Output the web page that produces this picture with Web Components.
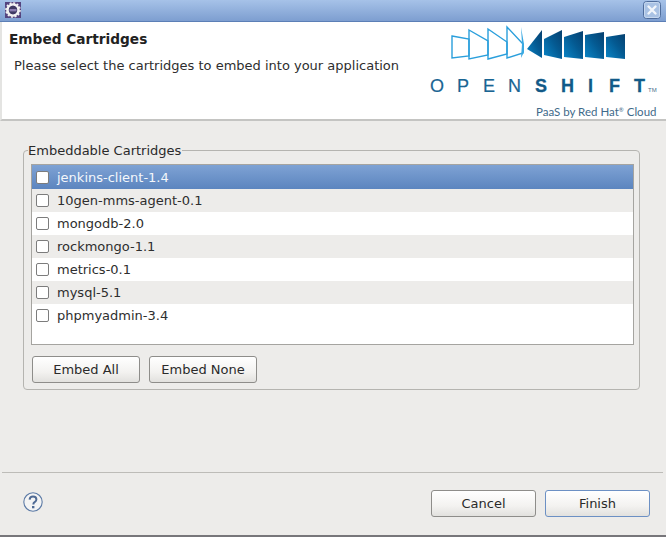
<!DOCTYPE html>
<html>
<head>
<meta charset="utf-8">
<title>Embed Cartridges</title>
<style>
  html, body { margin: 0; padding: 0; height: 100%; overflow: hidden; }
  body { font: 13px "DejaVu Sans", sans-serif; color: #2a2a2a; background: #edecea; }
</style>
</head>
<body>
<wizard-dialog>
  <title-bar slot="title"></title-bar>
  <wizard-header slot="header" heading="Embed Cartridges" message="Please select the cartridges to embed into your application">
    <openshift-logo></openshift-logo>
  </wizard-header>
  <group-box label="Embeddable Cartridges">
    <cartridge-list>
      <cartridge-row selected>jenkins-client-1.4</cartridge-row>
      <cartridge-row alt>10gen-mms-agent-0.1</cartridge-row>
      <cartridge-row>mongodb-2.0</cartridge-row>
      <cartridge-row alt>rockmongo-1.1</cartridge-row>
      <cartridge-row>metrics-0.1</cartridge-row>
      <cartridge-row alt>mysql-5.1</cartridge-row>
      <cartridge-row>phpmyadmin-3.4</cartridge-row>
    </cartridge-list>
    <div slot="actions" style="display:flex;gap:9px;margin-left:1px">
      <push-button>Embed All</push-button>
      <push-button>Embed None</push-button>
    </div>
  </group-box>
  <wizard-footer slot="footer">
    <help-icon slot="help"></help-icon>
    <push-button>Cancel</push-button>
    <push-button default>Finish</push-button>
  </wizard-footer>
</wizard-dialog>
<script>
function define(name, html, init) {
  customElements.define(name, class extends HTMLElement {
    connectedCallback() {
      if (this.shadowRoot) return;
      const root = this.attachShadow({ mode: "open" });
      root.innerHTML = typeof html === "function" ? html(this) : html;
      if (init) init(this, root);
    }
  });
}

define("wizard-dialog", `
  <style>
    :host { display: flex; flex-direction: column; height: 537px; box-sizing: border-box; border-bottom: 2px solid #77767a; background: #edecea; }
    main { flex: 1; padding: 22px 26px 0 23px; }
  </style>
  <slot name="title"></slot>
  <slot name="header"></slot>
  <main><slot></slot></main>
  <slot name="footer"></slot>
`);

define("title-bar", `
  <style>
    :host { display: flex; align-items: flex-start; justify-content: space-between; height: 21px; padding: 0 5px; background: linear-gradient(#a6c2e8, #7d9ed0); border-bottom: 1px solid #5c7fb6; }
    svg { display: block; }
    .icon { margin-top: 2px; }
    .close { margin-top: 1px; }
  </style>
  <svg class="icon" width="16" height="16" viewBox="0 0 16 16">
    <rect width="16" height="16" fill="#54447f"/>
    <circle cx="8" cy="8" r="5.5" fill="none" stroke="#f2f2f2" stroke-width="2.6"/>
    <circle cx="8" cy="8" r="7" fill="none" stroke="#f2f2f2" stroke-width="1.6" stroke-dasharray="2 1.66"/>
    <circle cx="8" cy="8" r="4.2" fill="#3f3a63"/>
    <rect x="4.5" y="7" width="7" height="2.4" fill="#8a7db0"/>
  </svg>
  <svg class="close" width="18" height="18" viewBox="0 0 18 18">
    <rect x=".5" y=".5" width="17" height="17" rx="3" fill="#a9c2e4" stroke="#4f6d9c"/>
    <rect x="1.5" y="1.5" width="15" height="15" rx="2" fill="none" stroke="#c6d8ef"/>
    <path d="M5.5 5.5l7 7M12.5 5.5l-7 7" stroke="#f2f6fb" stroke-width="2.4" stroke-linecap="round"/>
  </svg>
`);

define("wizard-header", el => `
  <style>
    :host { display: flex; justify-content: space-between; height: 97px; background: #fff; border-left: 2px solid #e4e4e2; border-bottom: 2px solid #c4c4c2; box-sizing: content-box; }
    .text { padding: 9px 0 0 7px; }
    h1 { margin: 0; font: bold 13.7px "DejaVu Sans", sans-serif; color: #222; line-height: 17px; }
    p { margin: 9px 0 0 5px; font-size: 13px; line-height: 17px; color: #2e2e2e; }
  </style>
  <div class="text"><h1>${el.getAttribute("heading")}</h1><p>${el.getAttribute("message")}</p></div>
  <slot></slot>
`);

define("openshift-logo", `
  <style>
    :host { display: block; width: 236px; height: 97px; flex: none; }
    svg { display: block; }
    .thin { font: 18px "Liberation Sans", sans-serif; fill: #1a6593; stroke: #1a6593; stroke-width: .2; }
    .bold { font: bold 18px "Liberation Sans", sans-serif; fill: #125a88; stroke: #125a88; stroke-width: .3; }
    .tag { font: 11.5px "Lato", sans-serif; fill: #3f6a8a; }
    .tm { font: 6px "Liberation Sans", sans-serif; fill: #4a6f8c; }
  </style>
  <svg width="236" height="97" viewBox="430 22 236 97">
    <defs>
      <linearGradient id="g" x1="0" y1="1" x2="1" y2="0">
        <stop offset="0" stop-color="#0a86c8"/><stop offset=".55" stop-color="#045a92"/><stop offset="1" stop-color="#06406f"/>
      </linearGradient>
    </defs>
    <g fill="none" stroke="#2a9fdc" stroke-width="1.4">
      <path d="M452 36L469 39V56L452 58Z"/>
      <path d="M469 30L488 41V55L469 59Z"/>
      <path d="M488 29L507 42V54L488 59Z"/>
      <path d="M507 27L523 44V53L507 58Z"/>
    </g>
    <path d="M521 27L524 44V52L521 58L522 44Z" fill="#3aa9e2"/>
    <g fill="url(#g)">
      <path d="M527 49L542 30V58Z"/>
      <path d="M544 39L562 30V59L544 55Z"/>
      <path d="M564 37L583 31V59L564 57Z"/>
      <path d="M585 35L604 32V59L585 57Z"/>
      <path d="M606 37L625 34V59L606 57Z"/>
    </g>
    <text class="thin" x="430" y="92">O</text>
    <text class="thin" x="457" y="92">P</text>
    <text class="thin" x="483" y="92">E</text>
    <text class="thin" x="508" y="92">N</text>
    <text class="bold" x="535" y="92">S</text>
    <text class="bold" x="561" y="92">H</text>
    <text class="bold" x="588" y="92">I</text>
    <text class="bold" x="609" y="92">F</text>
    <text class="bold" x="634" y="92">T</text>
    <text class="tm" x="648" y="92">TM</text>
    <text class="tag" x="536" y="116">PaaS by Red Hat<tspan font-size="6" dy="-4">®</tspan><tspan dy="4"> Cloud</tspan></text>
  </svg>
`);

define("group-box", el => `
  <style>
    :host { display: block; }
    fieldset { margin: 0; padding: 6px 5px 7px 7px; border: 1px solid #b5b4b0; border-radius: 4px; height: 247px; box-sizing: border-box; }
    legend { padding: 0 1px 0 0; margin-left: -3px; font-size: 13px; line-height: 15px; color: #2a2a2a; }
    .actions { margin-top: 11px; }
  </style>
  <fieldset>
    <legend>${el.getAttribute("label")}</legend>
    <slot></slot>
    <div class="actions"><slot name="actions"></slot></div>
  </fieldset>
`);

define("cartridge-list", `
  <style>
    :host { display: block; height: 181px; box-sizing: border-box; background: #fff; border: 1px solid #a5a4a0; padding-top: 1px; }
  </style>
  <slot></slot>
`);

define("cartridge-row", `
  <style>
    :host { display: flex; align-items: center; gap: 8px; height: 23px; padding-left: 4px; font-size: 13px; color: #2e2e2e; }
    :host([alt]) { background: #edecea; }
    :host([selected]) { background: linear-gradient(#7ea2d4, #5c85bf); color: #f4f7fb; margin-top: -1px; padding-top: 1px; height: 23px; }
    i { display: block; width: 13px; height: 13px; box-sizing: border-box; background: #fff; border: 1px solid #7c7c7c; border-radius: 2px; }
  </style>
  <i></i><slot></slot>
`);

define("push-button", `
  <style>
    :host { display: flex; align-items: center; justify-content: center; width: 108px; height: 27px; box-sizing: border-box; font-size: 13px; color: #2a2a2a; background: linear-gradient(#fff, #f3f2f0 60%, #e2e1de); border: 1px solid #8e8d8a; border-radius: 3px; }
    :host([default]) { border-color: #6c90c4; }
  </style>
  <slot></slot>
`);

define("wizard-footer", `
  <style>
    :host { display: flex; align-items: flex-start; gap: 9px; height: 63px; margin-left: 2px; margin-right: 3px; padding: 17px 13px 0 21px; box-sizing: border-box; border-top: 1px solid #bdbcb8; }
    .help { flex: 1; padding-top: 2px; }
    ::slotted(push-button) { width: 105px; }
  </style>
  <div class="help"><slot name="help"></slot></div>
  <slot></slot>
`);

define("help-icon", `
  <style>
    :host { display: block; width: 20px; height: 20px; }
    svg { display: block; }
  </style>
  <svg width="20" height="20" viewBox="0 0 20 20">
    <circle cx="10" cy="10" r="9.2" fill="#f4f4f4" stroke="#5d7ba6" stroke-width="1.1"/>
    <path d="M6.6 7.6C6.8 5.4 8.3 4.6 10 4.6c2 0 3.4 1.1 3.4 2.8 0 1.4-.8 2-1.8 2.7-.8.5-1.2 1-1.2 2v.5" fill="none" stroke="#4f6a94" stroke-width="2"/>
    <rect x="9" y="14" width="2.4" height="2.3" fill="#4f6a94"/>
  </svg>
`);
</script>
</body>
</html>
